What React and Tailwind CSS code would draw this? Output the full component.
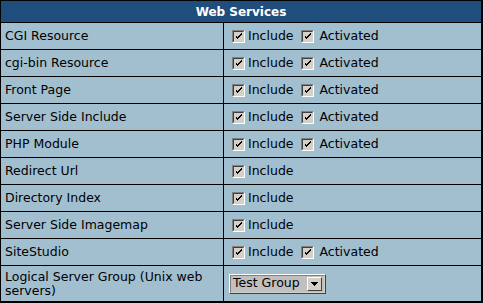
const rows = [
  { label: 'CGI Resource', activated: true },
  { label: 'cgi-bin Resource', activated: true },
  { label: 'Front Page', activated: true },
  { label: 'Server Side Include', activated: true },
  { label: 'PHP Module', activated: true },
  { label: 'Redirect Url', activated: false },
  { label: 'Directory Index', activated: false },
  { label: 'Server Side Imagemap', activated: false },
  { label: 'SiteStudio', activated: true },
];

function Check() {
  return (
    <span className="inline-flex w-[13px] h-[13px] shrink-0 border border-t-[#808080] border-l-[#808080] border-b-white border-r-white bg-[#d4d0c8]">
      <span className="flex w-full h-full border border-t-[#404040] border-l-[#404040] border-b-[#d4d0c8] border-r-[#d4d0c8] items-center justify-center">
        <svg width="7" height="7" viewBox="0 0 7 7" shapeRendering="crispEdges">
          <path d="M0 2h1v3h1v1h1v-1h1v-1h1v-1h1v-1h1v-2h-1v1h-1v1h-1v1h-1v1h-1v-1h-1v-1h-1z" fill="#000" />
        </svg>
      </span>
    </span>
  );
}

function Cell({ children, className = '' }) {
  return <div className={`bg-[#a2bfd0] flex items-center ${className}`}>{children}</div>;
}

export default function App() {
  return (
    <div
      className="w-[483px] h-[303px] bg-black p-px pr-[2px] pb-[2px] text-[12.5px] text-black"
      style={{ fontFamily: '"DejaVu Sans", Verdana, sans-serif' }}
    >
      <div className="grid grid-cols-[222px_1fr] gap-px h-full grid-rows-[21px_repeat(9,26px)_1fr]">
        <div className="col-span-2 bg-[#1f4e7c] text-white font-bold text-[12px] flex items-center justify-center">
          Web Services
        </div>
        {rows.map((r) => (
          <div key={r.label} className="contents">
            <Cell className="pl-[4px] pt-px">{r.label}</Cell>
            <Cell className="pl-[8px] pt-px">
              <Check />
              <span className="ml-[3px]">Include</span>
              {r.activated && (
                <>
                  <span className="ml-[7px]"><Check /></span>
                  <span className="ml-[6px]">Activated</span>
                </>
              )}
            </Cell>
          </div>
        ))}
        <Cell className="pl-[4px] leading-[14px]">Logical Server Group (Unix web servers)</Cell>
        <Cell className="pl-[5px]">
          <div className="flex items-center h-[20px] w-[97px] border border-t-white border-l-white border-b-[#404040] border-r-[#404040]">
            <div className="flex items-center h-full flex-1 bg-[#c0c0c0] border border-t-[#808080] border-l-[#808080] border-b-[#d4d0c8] border-r-[#d4d0c8] pl-[2px] pr-[2px]">
              <span className="flex-1">Test Group</span>
              <span className="flex items-center justify-center w-[15px] h-[14px] bg-[#d4d0c8] border border-t-white border-l-white border-b-[#404040] border-r-[#404040]">
                <svg width="7" height="4" viewBox="0 0 7 4" shapeRendering="crispEdges">
                  <path d="M0 0h7v1h-1v1h-1v1h-1v1h-1v-1h-1v-1h-1v-1h-1z" fill="#000" />
                </svg>
              </span>
            </div>
          </div>
        </Cell>
      </div>
    </div>
  );
}
